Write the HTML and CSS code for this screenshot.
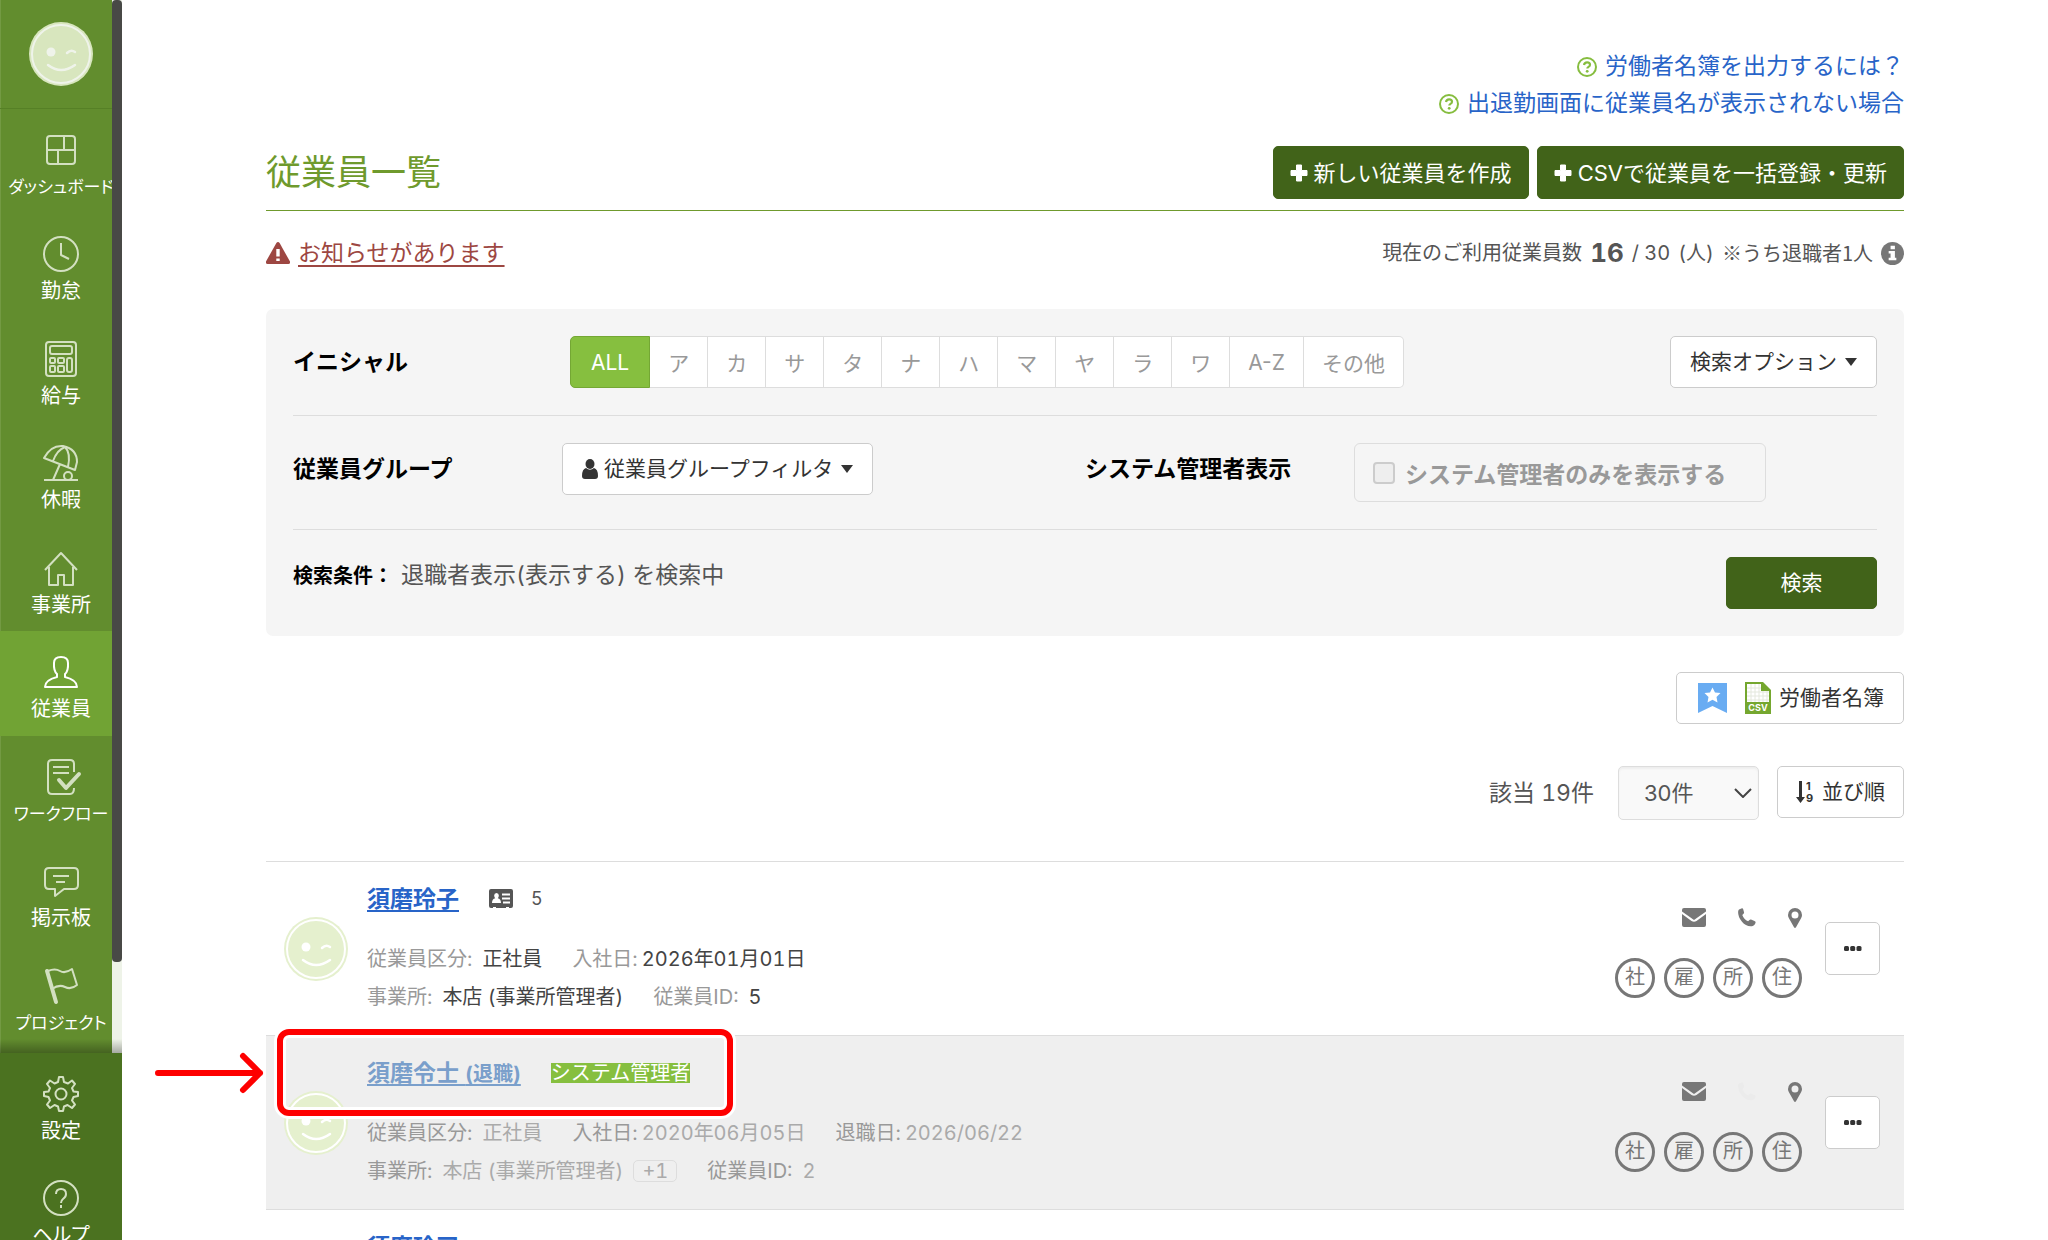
FILE: index.html
```
<!DOCTYPE html>
<html lang="ja">
<head>
    <meta charset="UTF-8">
    <meta name="viewport" content="width=device-width, initial-scale=1.0">
    <title>従業員一覧</title>
    <link rel="stylesheet" href="styles.css">
</head>
<body>
    <!-- 共通アイコン -->
    <svg class="sprite" aria-hidden="true">
        <symbol id="face" viewBox="0 0 64 64">
            <circle class="face-bg" cx="32" cy="32" r="32"/>
            <g class="face-line" fill="none" stroke-width="2">
                <circle cx="32" cy="32" r="29"/>
                <path d="M38 31q4-4 8-1M19 43q13 10 27 0" stroke-width="2.5" stroke-linecap="round"/>
            </g>
            <circle class="face-eye" cx="22" cy="30" r="4.5"/>
        </symbol>
        <symbol id="question" viewBox="0 0 20 20">
            <circle cx="10" cy="10" r="9" fill="none" stroke="currentColor" stroke-width="2"/>
            <path d="M7 8q.4-2.700 3.100-2.700 2.900 0 2.900 2.400 0 1.400-1.500 2.200-1.200.7-1.200 1.700" fill="none" stroke="currentColor" stroke-width="2.200"/>
            <circle cx="10.200" cy="14.300" r="1.400" fill="currentColor"/>
        </symbol>
        <symbol id="plus" viewBox="0 0 18 18">
            <path d="M6.500 1h5v5.500H17v5h-5.500V17h-5v-5.500H1v-5h5.500z" fill="currentColor" stroke="currentColor" stroke-linejoin="round"/>
        </symbol>
        <symbol id="caret" viewBox="0 0 12 8">
            <path d="M0 0h12L6 8z" fill="currentColor"/>
        </symbol>
        <symbol id="mail" viewBox="0 0 24 20">
            <path d="M2 0h20q2 0 2 2v1.500L12 12 0 3.500V2q0-2 2-2z" fill="currentColor"/>
            <path d="M0 6l9.500 7q2.500 1.600 5 0L24 6v11q0 2-2 2H2q-2 0-2-2z" fill="currentColor"/>
        </symbol>
        <symbol id="phone" viewBox="0 0 18 20">
            <path d="M1 1.500L4 .3q1 0 1.200 1l.9 3.200q.1.900-.8 1.500l-1 .9q1.500 4.300 5.800 6.300l1.400-1.300q.7-.6 1.500-.3l3.500 1.300q1.500.6 1.100 1.600-.9 3.300-3.600 3.700Q8 18.800 4 13.800 0 9 .1 4 .2 2.300 1 1.500z" fill="currentColor"/>
        </symbol>
        <symbol id="pin" viewBox="0 0 14 20">
            <path fill-rule="evenodd" d="M7 0a7 7 0 0 1 7 7q0 1.500-.8 3L8 19.300q-1 1.300-2 0L.8 10Q0 8.500 0 7a7 7 0 0 1 7-7zm0 3.500a3.500 3.500 0 1 0 0 7 3.500 3.500 0 0 0 0-7z" fill="currentColor"/>
        </symbol>
        <symbol id="dots" viewBox="0 0 18 6">
            <rect y="0" width="5" height="5" rx="1.500" fill="currentColor"/>
            <rect x="6.200" width="5" height="5" rx="1.500" fill="currentColor"/>
            <rect x="12.500" width="5" height="5" rx="1.500" fill="currentColor"/>
        </symbol>
    </svg>

    <div class="app">
        <nav class="sidebar">
            <div class="sidebar-scroll">
                <a class="user" href="#"><svg class="avatar"><use href="#face"/></svg></a>
                <ul class="menu">
                    <li><a href="#">
                        <svg viewBox="0 0 36 36"><rect x="4" y="4" width="28" height="28" rx="3"/><path d="M4 18h28M21 4v14M15 18v14"/></svg>
                        <span class="long">ダッシュボード</span></a></li>
                    <li><a href="#">
                        <svg viewBox="0 0 36 36"><circle cx="18" cy="18" r="17"/><path d="M18 7v12l8 4"/></svg>
                        <span>勤怠</span></a></li>
                    <li><a href="#">
                        <svg viewBox="0 0 36 36"><rect x="3" y="1" width="30" height="34" rx="3"/><rect x="7" y="5" width="22" height="8" rx="2"/><rect x="7" y="17" width="5" height="5" rx="1"/><rect x="15" y="17" width="6" height="5" rx="1"/><rect x="7" y="25" width="5" height="6" rx="1"/><rect x="15" y="25" width="6" height="6" rx="1"/><rect x="24" y="17" width="5" height="14" rx="2"/></svg>
                        <span>給与</span></a></li>
                    <li><a href="#">
                        <svg viewBox="0 0 36 36"><path d="M1 13Q8 0 20 1q14 3 14 16l-2 8zM10 16Q14 5 22 2q6 6 3 20M17 19l-7 16M1 35h34"/><circle cx="25" cy="31" r="4"/></svg>
                        <span>休暇</span></a></li>
                    <li><a href="#">
                        <svg viewBox="0 0 36 36"><path d="M2 20L18 3l16 17M6 17v18h9V25h6v10h9V17"/></svg>
                        <span>事業所</span></a></li>
                    <li class="active"><a href="#">
                        <svg viewBox="0 0 36 36"><path d="M18 3q7 0 7 6 .5 8-3 11v3q12 3 12 10H2q0-7 12-10v-3q-3.500-3-3-11 0-6 7-6z"/></svg>
                        <span>従業員</span></a></li>
                    <li><a href="#">
                        <svg viewBox="0 0 36 36"><path d="M31 13V5q0-4-4-4H9Q5 1 5 5v26q0 4 4 4h18q4 0 4-6M10 8h16M10 14h16"/><path class="bold" d="M16 21l7 8 13-14"/></svg>
                        <span class="long">ワークフロー</span></a></li>
                    <li><a href="#">
                        <svg viewBox="0 0 36 36"><path d="M6 5h25q4 0 4 4v13q0 4-4 4H21l-9 7v-7H6q-4 0-4-4V9q0-4 4-4zM10 13h16M13 19h9"/></svg>
                        <span>掲示板</span></a></li>
                    <li><a href="#">
                        <svg viewBox="0 0 36 36"><path class="bold" d="M4 3l9 31"/><path d="M5 3q7-3 12 0t12-2l5 16q-6 5-12 2t-13 2"/></svg>
                        <span class="long">プロジェクト</span></a></li>
                </ul>
                <div class="scrollbar"><i></i></div>
            </div>
            <ul class="menu menu-bottom">
                <li><a href="#">
                    <svg viewBox="0 0 36 36"><circle cx="18" cy="18" r="5.500"/><path d="M16 1h4l1 5 4 1.500 4-3L32 8l-3 4 1.500 3.500L35 16v4l-4.500 1L29 24.500l3 4L29 32l-4.500-3-3.500 1.500L20 35h-4l-1-4.500L11.500 29 7 32l-3-3.500 3-4L5.500 21 1 20v-4l4.500-.5L7 12 4 8l3-3.500 4.500 3L15 6z"/></svg>
                    <span>設定</span></a></li>
                <li><a href="#">
                    <svg viewBox="0 0 36 36"><circle cx="18" cy="18" r="17"/><path d="M13 14q0-5 5-5t5 5q0 3-3 5-2 1.500-2 4M18 25v3"/></svg>
                    <span>ヘルプ</span></a></li>
            </ul>
        </nav>

        <main class="content">
            <div class="help-links">
                <a href="#"><svg class="q"><use href="#question"/></svg>労働者名簿を出力するには？</a>
                <a href="#"><svg class="q"><use href="#question"/></svg>出退勤画面に従業員名が表示されない場合</a>
            </div>

            <header class="page-header">
                <h1>従業員一覧</h1>
                <div class="header-buttons">
                    <button type="button" class="btn btn-primary"><svg class="plus"><use href="#plus"/></svg>新しい従業員を作成</button>
                    <button type="button" class="btn btn-primary"><svg class="plus"><use href="#plus"/></svg>CSVで従業員を一括登録・更新</button>
                </div>
            </header>

            <div class="notice">
                <div class="alert">
                    <svg viewBox="0 0 24 22"><path d="M12 0q1 0 1.600 1L24 19.500q.5 2.300-1.500 2.500h-21Q-.5 21.800 0 19.500L10.400 1Q11 0 12 0z" fill="#9d4742"/><path d="M10.300 7h3.400v7.500h-3.400zM10.300 16.500h3.400V19h-3.400z" fill="#fff"/></svg>
                    <a href="#">お知らせがあります</a>
                </div>
                <p class="usage">
                    <span>現在のご利用従業員数</span>
                    <strong>16</strong>
                    <span>/ 30</span>
                    <span>(人)</span>
                    <span class="note">※うち退職者1人</span>
                    <svg viewBox="0 0 24 24"><circle cx="12" cy="12" r="12" fill="#777"/><path d="M10 4h4.500v3.500H10zM8 9.500h6.500v7H16V19H8v-2.500h2V12H8z" fill="#fff"/></svg>
                </p>
            </div>

            <form class="search-panel">
                <div class="panel-row">
                    <span class="label">イニシャル</span>
                    <div class="initials">
                        <button type="button" class="on">ALL</button>
                        <button type="button">ア</button>
                        <button type="button">カ</button>
                        <button type="button">サ</button>
                        <button type="button">タ</button>
                        <button type="button">ナ</button>
                        <button type="button">ハ</button>
                        <button type="button">マ</button>
                        <button type="button">ヤ</button>
                        <button type="button">ラ</button>
                        <button type="button">ワ</button>
                        <button type="button">A-Z</button>
                        <button type="button">その他</button>
                    </div>
                    <button type="button" class="btn push">検索オプション<svg class="caret"><use href="#caret"/></svg></button>
                </div>
                <div class="panel-row">
                    <div class="half">
                        <span class="label">従業員グループ</span>
                        <button type="button" class="btn"><svg class="person" viewBox="0 0 16 20"><ellipse cx="8" cy="5" rx="4.500" ry="5" fill="currentColor"/><path d="M4 9q4 3.500 8 0 4 1 4 8 0 3-3 3H3q-3 0-3-3 0-7 4-8z" fill="currentColor"/></svg>従業員グループフィルタ<svg class="caret"><use href="#caret"/></svg></button>
                    </div>
                    <div class="half">
                        <span class="label">システム管理者表示</span>
                        <label class="check"><input type="checkbox" disabled>システム管理者のみを表示する</label>
                    </div>
                </div>
                <div class="panel-row">
                    <p class="condition"><b>検索条件：</b>退職者表示(表示する) を検索中</p>
                    <button type="submit" class="btn btn-primary btn-search push">検索</button>
                </div>
            </form>

            <div class="export">
                <button type="button" class="btn">
                    <svg class="bookmark" viewBox="0 0 29 30"><path d="M0 0h29v30l-14.500-7L0 30z" fill="#69acf2"/><path d="M14.500 4.500l2.500 5 5.500.6-4 3.900 1 5.500-5-2.700-5 2.700 1-5.500-4-3.900 5.500-.6z" fill="#fff"/></svg>
                    <svg class="csv" viewBox="0 0 26 32"><path d="M0 0h18l8 8v24H0z" fill="#75a72f"/><path d="M2 2h14v7h8v11H2z" fill="#fff"/><path d="M6 2v18M10 2v18M14 2v18M18 9v11M22 9v11M2 6h14M2 10h22M2 14h22M2 18h22" stroke="#e4e8dd"/><text x="13" y="29" text-anchor="middle">CSV</text></svg>
                    労働者名簿
                </button>
            </div>

            <div class="list-tools">
                <span class="hits">該当 19件</span>
                <div class="select">
                    <select aria-label="表示件数"><option>30件</option></select>
                    <svg viewBox="0 0 18 10"><path d="M1 1l8 8 8-8" fill="none" stroke="#444" stroke-width="2"/></svg>
                </div>
                <button type="button" class="btn btn-sort"><svg viewBox="0 0 18 22"><path d="M3 0h3v16h3l-4.500 6L0 16h3z" fill="currentColor"/><text x="10" y="9">1</text><text x="10" y="21">9</text></svg>並び順</button>
            </div>

            <ul class="employees">
                <li>
                    <svg class="avatar"><use href="#face"/></svg>
                    <div class="info">
                        <div class="name"><a href="#">須磨玲子</a>
                            <svg class="card" viewBox="0 0 24 20"><path fill-rule="evenodd" d="M2 0h20q2 0 2 2v15q0 2-2 2h-2v-1h-3v1H7v-1H4v1H2q-2 0-2-2V2q0-2 2-2zm5.500 4Q5 4.300 5.200 7q.2 1.600 1 2.300Q3 10 3 14h9q0-4-3.200-4.700.8-.7 1-2.300Q10 4.300 7.500 4zM13 4.500v2h8v-2zm0 4v2h8v-2zm1 4v2h7v-2z" fill="#555"/></svg>
                            <span class="no">5</span></div>
                        <dl>
                            <div><dt>従業員区分:</dt><dd>正社員</dd></div>
                            <div class="date"><dt>入社日:</dt><dd>2026年01月01日</dd></div>
                        </dl>
                        <dl>
                            <div><dt>事業所:</dt><dd>本店 (事業所管理者)</dd></div>
                            <div><dt>従業員ID:</dt><dd>5</dd></div>
                        </dl>
                    </div>
                    <div class="status">
                        <div class="contacts"><svg class="mail"><use href="#mail"/></svg><svg class="phone"><use href="#phone"/></svg><svg class="pin"><use href="#pin"/></svg></div>
                        <div class="marks"><span>社</span><span>雇</span><span>所</span><span>住</span></div>
                    </div>
                    <button type="button" class="btn btn-more" aria-label="メニュー"><svg><use href="#dots"/></svg></button>
                </li>
                <li class="retired">
                    <svg class="avatar"><use href="#face"/></svg>
                    <div class="info">
                        <div class="name"><a href="#">須磨令士 <small>(退職)</small></a><span class="badge">システム管理者</span></div>
                        <dl>
                            <div><dt>従業員区分:</dt><dd>正社員</dd></div>
                            <div class="date"><dt>入社日:</dt><dd>2020年06月05日</dd></div>
                            <div class="date"><dt>退職日:</dt><dd>2026/06/22</dd></div>
                        </dl>
                        <dl>
                            <div><dt>事業所:</dt><dd>本店 (事業所管理者)<span class="more">+1</span></dd></div>
                            <div><dt>従業員ID:</dt><dd>2</dd></div>
                        </dl>
                    </div>
                    <div class="status">
                        <div class="contacts"><svg class="mail"><use href="#mail"/></svg><svg class="phone off"><use href="#phone"/></svg><svg class="pin"><use href="#pin"/></svg></div>
                        <div class="marks"><span>社</span><span>雇</span><span>所</span><span>住</span></div>
                    </div>
                    <button type="button" class="btn btn-more" aria-label="メニュー"><svg><use href="#dots"/></svg></button>
                    <!-- 赤枠と矢印 -->
                    <svg class="callout" viewBox="0 0 590 100" fill="none" stroke-linecap="round" stroke-linejoin="round">
                        <g stroke="#fff" stroke-width="12"><path d="M8 49h102M93 32l17 17-17 17"/><rect x="130" y="8" width="450" height="81" rx="9"/></g>
                        <g stroke="#fe0000" stroke-width="6"><path d="M8 49h102M93 32l17 17-17 17"/><rect x="130" y="8" width="450" height="81" rx="9"/></g>
                    </svg>
                </li>
                <li>
                    <svg class="avatar"><use href="#face"/></svg>
                    <div class="info">
                        <div class="name"><a href="#">須磨玲司</a></div>
                    </div>
                </li>
            </ul>
        </main>
    </div>
</body>
</html>
```
FILE: styles.css
```
* {
    box-sizing: border-box;
}

body {
    margin: 0;
    font-family: Inter, "Noto Sans CJK JP", sans-serif;
    font-size: 20px;
    font-variant-numeric: tabular-nums;
    color: #555;
    background-color: #fff;
}

ul, dl, dd, p, h1 {
    margin: 0;
    padding: 0;
    list-style: none;
}

button, select {
    font-family: inherit;
    font-size: 21px;
    cursor: pointer;
}

svg {
    flex: none;
}

.sprite {
    position: absolute;
    width: 0;
    height: 0;
}

.app {
    display: flex;
    height: 100vh;
}

/* サイドバー */
.sidebar {
    display: flex;
    flex-direction: column;
    flex: none;
    width: 122px;
    background-color: #628d2e;
}

.sidebar-scroll {
    position: relative;
    display: flex;
    flex-direction: column;
    flex: 1;
    padding-bottom: 4px;
    box-shadow: inset 1px 0 #739a43;
}

.sidebar-scroll::after {
    content: "";
    position: absolute;
    left: 0;
    right: 0;
    bottom: 0;
    height: 14px;
    background: linear-gradient(rgba(0, 0, 0, 0), rgba(0, 0, 0, 0.3));
}

.user {
    display: flex;
    align-items: center;
    justify-content: center;
    height: 109px;
    border-bottom: 1px solid #568026;
}

.avatar {
    width: 64px;
    height: 64px;
}

.face-bg {
    fill: #e5f0ce;
}

.face-line {
    stroke: #fff;
}

.face-eye {
    fill: #fff;
}

.user .avatar {
    opacity: 0.9;
}

.menu {
    display: flex;
    flex-direction: column;
    flex: 1;
}

.menu li {
    flex: 1;
}

.menu a {
    display: flex;
    flex-direction: column;
    align-items: center;
    gap: 4px;
    padding-top: 23px;
    color: #fff;
    line-height: 30px;
    text-decoration: none;
    white-space: nowrap;
    font-feature-settings: "palt";
}

.menu .long {
    font-size: 17px;
}

.menu svg {
    width: 36px;
    height: 36px;
    fill: none;
    stroke: #d3e0c1;
    stroke-width: 2;
    stroke-linejoin: round;
    overflow: visible;
}

.menu .bold {
    stroke-width: 4;
    stroke-linecap: round;
}

.menu .active {
    background-color: #71a334;
}

.menu .active svg {
    stroke: #fff;
}

.menu-bottom {
    flex: none;
    height: 187px;
    background-color: #4b7220;
    overflow: hidden;
}

.menu-bottom li {
    flex: none;
    height: 104px;
}

.scrollbar {
    position: absolute;
    top: 0;
    right: 0;
    bottom: 0;
    width: 10px;
    background-color: #eef3e8;
}

.scrollbar i {
    display: block;
    height: calc(100% - 91px);
    border-radius: 4px;
    background-color: #484946;
}

/* コンテンツ */
.content {
    flex: 1;
    padding: 48px 144px 0;
    overflow: auto;
    scrollbar-width: none;
}

.help-links {
    display: flex;
    flex-direction: column;
    align-items: flex-end;
}

.help-links a {
    display: flex;
    align-items: center;
    gap: 8px;
    font-size: 23px;
    line-height: 37px;
    color: #2864c8;
    text-decoration: none;
}

.q {
    width: 20px;
    height: 20px;
    color: #86bd3f;
}

.page-header {
    display: flex;
    align-items: center;
    justify-content: space-between;
    margin-top: 24px;
    padding-bottom: 11px;
    border-bottom: 1px solid #6f9a2d;
}

.page-header h1 {
    font-size: 35px;
    font-weight: normal;
    line-height: 53px;
    color: #6f9a2d;
}

.header-buttons {
    display: flex;
    gap: 8px;
}

.btn {
    display: flex;
    align-items: center;
    justify-content: center;
    height: 52px;
    padding: 0 19px;
    border: 1px solid #ccc;
    border-radius: 5px;
    background-color: #fff;
    color: #333;
    line-height: 30px;
    white-space: nowrap;
}

.btn-primary {
    border-color: #416319;
    background-color: #416319;
    color: #fff;
}

.header-buttons .btn {
    height: 53px;
    padding: 0 16px;
    font-size: 22px;
}

.plus {
    width: 18px;
    height: 18px;
    margin-right: 6px;
}

.caret {
    width: 12px;
    height: 8px;
    margin-left: 8px;
}

.push {
    margin-left: auto;
}

.notice {
    display: flex;
    justify-content: space-between;
    height: 34px;
    margin-top: 25px;
    line-height: 34px;
}

.alert {
    display: flex;
    align-items: center;
    gap: 8px;
    font-size: 23px;
}

.alert svg {
    width: 24px;
    height: 22px;
}

.alert a {
    color: #9d4742;
    text-underline-offset: 4px;
    text-decoration-thickness: 2px;
}

.usage {
    display: flex;
    align-items: center;
    gap: 8px;
}

.usage strong {
    font-size: 26px;
}

.usage .note {
    font-family: "Noto Sans CJK JP", sans-serif;
}

.usage svg {
    width: 23px;
    height: 23px;
}

/* 検索パネル */
.search-panel {
    margin-top: 39px;
    padding: 0 27px;
    border-radius: 7px;
    background-color: #f5f5f5;
}

.panel-row {
    display: flex;
    align-items: flex-start;
    padding: 27px 0;
}

.panel-row + .panel-row {
    border-top: 1px solid #ddd;
}

.half {
    display: flex;
    align-items: flex-start;
    flex: 1;
}

.label {
    flex: none;
    width: 269px;
    font-size: 23px;
    font-weight: bold;
    line-height: 52px;
    color: #000;
}

.initials {
    display: flex;
    margin-left: 8px;
}

.initials button {
    height: 52px;
    padding: 0 18px;
    border: 1px solid #ddd;
    border-left-width: 0;
    background-color: #fff;
    color: #999;
}

.initials .on {
    padding: 0 20px;
    border: 1px solid #74a734;
    border-radius: 5px 0 0 5px;
    background-color: #86bf3f;
    color: #fff;
}

.initials button:last-child {
    border-radius: 0 5px 5px 0;
}

.person {
    width: 16px;
    height: 20px;
    margin-right: 6px;
}

.check {
    display: flex;
    align-items: center;
    gap: 10px;
    height: 59px;
    padding: 0 39px 0 18px;
    border: 1px solid #ddd;
    border-radius: 6px;
    font-size: 23px;
    font-weight: bold;
    color: #999;
}

.check input {
    appearance: none;
    width: 22px;
    height: 22px;
    margin: 0;
    border: 2px solid #ccc;
    border-radius: 4px;
    background-color: #eee;
}

.condition {
    font-size: 23px;
    line-height: 36px;
}

.condition b {
    margin-right: 8px;
    font-size: 20px;
    color: #000;
}

.btn-search {
    width: 151px;
}

/* 一覧 */
.export {
    display: flex;
    justify-content: flex-end;
    margin-top: 36px;
}

.bookmark {
    width: 29px;
    height: 30px;
    margin-left: 2px;
    margin-right: 18px;
}

.csv {
    width: 26px;
    height: 32px;
    margin-right: 8px;
}

.csv text {
    font-size: 9px;
    font-weight: bold;
    fill: #fff;
}

.list-tools {
    display: flex;
    justify-content: flex-end;
    align-items: flex-start;
    margin-top: 42px;
}

.hits {
    margin-right: 24px;
    font-size: 23px;
    line-height: 54px;
}

.select {
    position: relative;
    margin-right: 18px;
}

.select select {
    appearance: none;
    width: 141px;
    height: 54px;
    padding: 0 25px;
    border: 1px solid #ddd;
    border-radius: 5px;
    background-color: #f9f9f9;
    box-shadow: inset 0 2px 2px #eee;
    font-size: 22px;
    color: #555;
}

.select svg {
    position: absolute;
    right: 7px;
    top: 22px;
    width: 18px;
    height: 10px;
    pointer-events: none;
}

.btn-sort {
    padding: 0 18px;
}

.btn-sort svg {
    width: 18px;
    height: 22px;
    margin-right: 8px;
    overflow: visible;
}

.btn-sort text {
    font-size: 11px;
    font-weight: bold;
    fill: currentColor;
}

.employees {
    margin-top: 41px;
}

.employees li {
    position: relative;
    display: flex;
    align-items: center;
    min-height: 174px;
    padding: 0 24px 0 18px;
    border-top: 1px solid #ddd;
}

.info {
    flex: 1;
    align-self: flex-start;
    margin-left: 19px;
    padding-top: 20px;
}

.name {
    display: flex;
    align-items: center;
    height: 34px;
    margin-bottom: 24px;
    font-size: 23px;
    line-height: 34px;
}

.name a {
    font-weight: bold;
    color: #2864c8;
    text-underline-offset: 3px;
    text-decoration-thickness: 2px;
}

.name small {
    font-size: 20px;
}

.card {
    width: 24px;
    height: 20px;
    margin-left: 30px;
}

.no {
    margin-left: 18px;
    font-size: 18px;
}

.badge {
    margin-left: 30px;
    background-color: #86bf3f;
    color: #fff;
    font-size: 20px;
    line-height: 20px;
}

.info dl {
    display: flex;
    gap: 30px;
    line-height: 38px;
}

.info dl div {
    display: flex;
    gap: 10px;
}

.info dl .date {
    gap: 4px;
}

.info dt {
    color: #999;
}

.info dd {
    display: flex;
    align-items: center;
    color: #444;
}

.employees .retired {
    background-color: #efefef;
}

.retired .name a {
    color: #7a9fcb;
}

.retired .info dd {
    color: #aaa;
}

.more {
    margin-left: 10px;
    padding: 0 8px;
    border: 1px solid #ddd;
    border-radius: 5px;
    line-height: 20px;
}

.status {
    display: flex;
    flex-direction: column;
    align-items: flex-end;
    gap: 30px;
    margin-top: 8px;
    color: #777;
}

.contacts {
    display: flex;
    align-items: center;
    gap: 32px;
}

.mail {
    width: 24px;
    height: 20px;
}

.phone {
    width: 18px;
    height: 20px;
}

.phone.off {
    color: #ebebeb;
}

.pin {
    width: 14px;
    height: 20px;
}

.marks {
    display: flex;
    gap: 9px;
}

.marks span {
    width: 40px;
    height: 40px;
    border: 3px solid #777;
    border-radius: 50%;
    line-height: 33px;
    text-align: center;
}

.btn-more {
    width: 55px;
    height: 53px;
    margin-left: 23px;
    padding: 0;
}

.btn-more svg {
    width: 18px;
    height: 6px;
}

.callout {
    position: absolute;
    left: -116px;
    top: -12px;
    width: 590px;
    height: 100px;
    pointer-events: none;
}
```
